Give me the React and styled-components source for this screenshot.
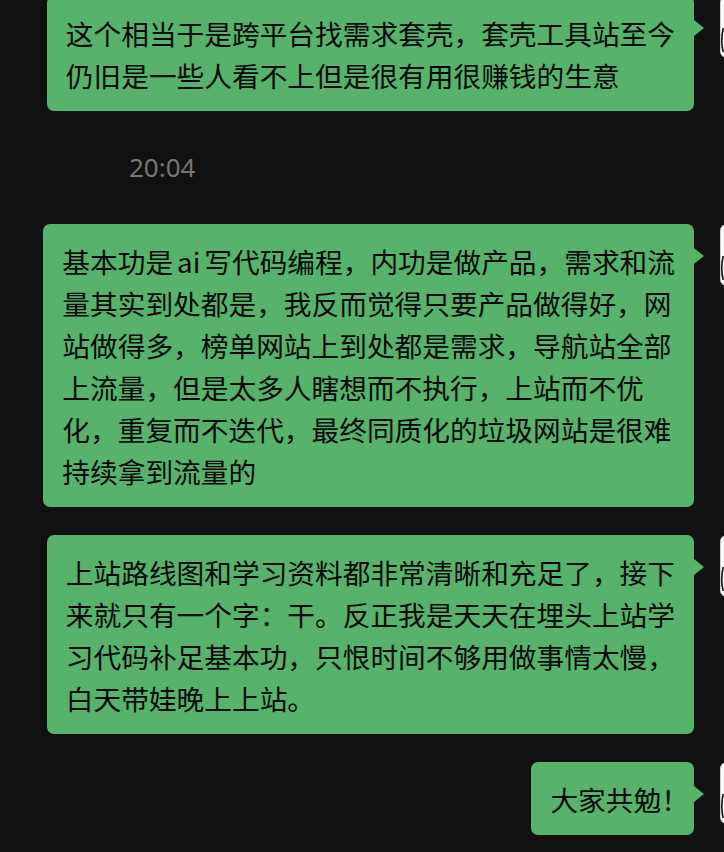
import React from 'react'
import styled, { createGlobalStyle } from 'styled-components'

const messages = [
  {
    id: 1,
    lines: ['这个相当于是跨平台找需求套壳，套壳工具站至今', '仍旧是一些人看不上但是很有用很赚钱的生意'],
  },
  { id: 't1', time: '20:04' },
  {
    id: 2,
    lines: [
      ['基本功是', 'ai', '写代码编程，内功是做产品，需求和流'],
      '量其实到处都是，我反而觉得只要产品做得好，网',
      '站做得多，榜单网站上到处都是需求，导航站全部',
      '上流量，但是太多人瞎想而不执行，上站而不优',
      '化，重复而不迭代，最终同质化的垃圾网站是很难',
      '持续拿到流量的',
    ],
  },
  {
    id: 3,
    lines: [
      '上站路线图和学习资料都非常清晰和充足了，接下',
      '来就只有一个字：干。反正我是天天在埋头上站学',
      '习代码补足基本功，只恨时间不够用做事情太慢，',
      '白天带娃晚上上站。',
    ],
  },
  { id: 4, lines: [['大家共勉', '！']] },
]

const App = () => {
  const renderLine = (line, i) => {
    if (typeof line === 'string') return <Line key={i}>{line}</Line>
    if (line[0] === '大家共勉') {
      return (
        <Line key={i}>
          {line[0]}
          <HalfPunct>{line[1]}</HalfPunct>
        </Line>
      )
    }
    return (
      <Line key={i}>
        {line[0]}
        <Latin>{line[1]}</Latin>
        {line[2]}
      </Line>
    )
  }

  return (
    <Page>
      <GlobalStyle />
      <Chat>
        {messages.map(msg =>
          msg.time ? (
            <Timestamp key={msg.id}>{msg.time}</Timestamp>
          ) : (
            <Row key={msg.id} $first={msg.id === 1}>
              <Bubble>{msg.lines.map(renderLine)}</Bubble>
              <Avatar>
                <svg width="62" height="62" viewBox="0 0 62 62">
                  <rect x="0.5" y="0.5" width="61" height="61" rx="6" fill="#fff" stroke="#cfcfcf" />
                  <path d="M3.2 32 C1.4 40 1.4 49 3.2 56" fill="none" stroke="#111" strokeWidth="1.6" />
                </svg>
              </Avatar>
            </Row>
          )
        )}
      </Chat>
    </Page>
  )
}

export default App

const GlobalStyle = createGlobalStyle`
html, body {
  margin: 0;
  padding: 0;
  background: #111111;
}
body {
  font-family: "Noto Sans CJK SC", "Noto Sans", sans-serif;
}
`

const Page = styled.div`
width: 724px;
height: 852px;
overflow: hidden;
background: #111111;
`

const Chat = styled.div`
display: flex;
flex-direction: column;
gap: 28px;
`

const Row = styled.div`
display: flex;
justify-content: flex-end;
align-items: flex-start;
gap: 26px;
margin-right: -58px;
margin-top: ${p => (p.$first ? '-4px' : '0')};
`

const Bubble = styled.div`
position: relative;
background: #57b36b;
color: #080808;
border-radius: 7px;
padding: 16px 19px 15px;
font-family: "Noto Sans CJK SC", sans-serif;
font-size: 27.7px;
line-height: 42px;

&::after{
  content: '';
  position: absolute;
  top: 24px;
  right: -10px;
  border-left: 10px solid #57b36b;
  border-top: 8px solid transparent;
  border-bottom: 8px solid transparent;
}
`

const Line = styled.span`
display: block;
white-space: nowrap;
`

const Latin = styled.span`
padding: 0 4px;
`

const HalfPunct = styled.span`
font-feature-settings: "halt";
`

const Avatar = styled.div`
width: 62px;
height: 62px;
flex-shrink: 0;

& > svg{
  display: block;
}
`

const Timestamp = styled.div`
padding: 13px 0 14px 129px;
font-family: "Noto Sans", sans-serif;
font-size: 26px;
line-height: 30px;
color: #747474;
`
